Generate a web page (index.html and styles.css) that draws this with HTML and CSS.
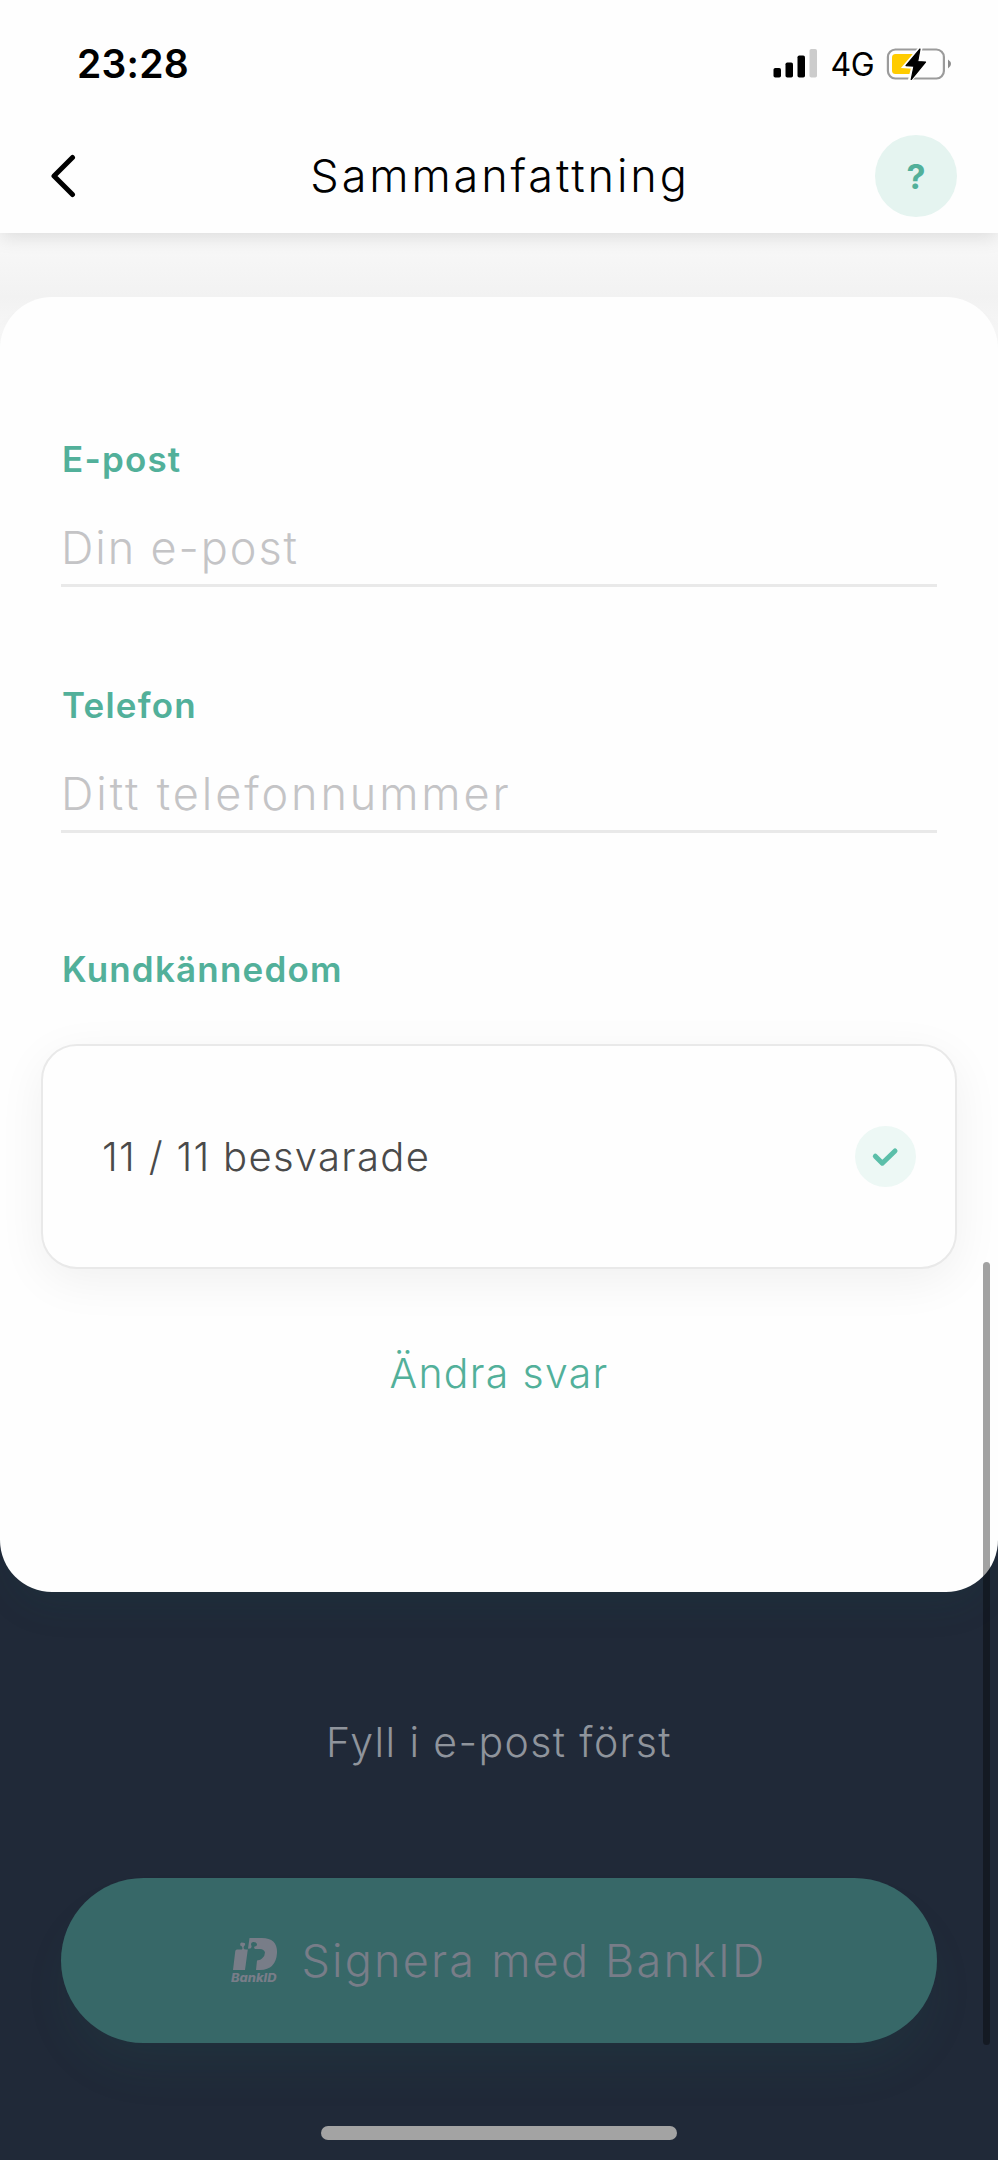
FILE: index.html
```html
<!DOCTYPE html>
<html lang="sv">

<head>
    <meta charset="UTF-8">
    <meta name="viewport" content="width=device-width, initial-scale=1.0">
    <title>Sammanfattning</title>
    <link rel="stylesheet" href="styles.css">
</head>

<body>

    <header>
        <div class="status-bar">
            <span class="time">23:28</span>
            <div class="status-icons">
                <svg class="signal" width="44" height="30" viewBox="0 0 44 30">
                    <rect x="0.5" y="19" width="7.5" height="9.5" rx="1.8" />
                    <rect x="12.5" y="13.5" width="7.5" height="15" rx="1.8" />
                    <rect x="24.5" y="6.5" width="7.5" height="22" rx="1.8" />
                    <rect x="36.5" y="0" width="7.5" height="28.5" rx="1.8" fill="#cccccc" />
                </svg>
                <span class="network">4G</span>
                <svg class="battery" width="66" height="34" viewBox="0 0 66 34">
                    <rect x="1.9" y="2.5" width="56" height="29" rx="7.5" fill="none" stroke="#9b9b9b" stroke-width="2.2" />
                    <path d="M62 12.5 Q65 14.5 65 17 Q65 19.5 62 21.5 Z" fill="#8c8c8c" />
                    <rect x="6" y="7" width="23" height="20" rx="3.5" fill="#ffcc00" />
                    <path d="M35 0 L18.5 19.5 L27 20 L23.5 34 L41 14.5 L32 14 Z" fill="#fff" stroke="#fff" stroke-width="3.5" />
                    <path d="M34 2 L20 18.6 L28 19.2 L25.2 32.5 L39.5 15 L31.7 14.5 Z" stroke="#000" stroke-width="1.2" stroke-linejoin="round" />
                </svg>
            </div>
        </div>
        <nav>
            <a href="#" class="back">
                <svg width="26" height="44" viewBox="0 0 26 44">
                    <path d="M22.5 3.5 L4 22 L22.5 40.5" />
                </svg>
            </a>
            <h1>Sammanfattning</h1>
            <a href="#" class="btn-help">?</a>
        </nav>
    </header>

    <main class="card">
        <div class="field">
            <label for="email">E-post</label>
            <input type="email" id="email" class="email" placeholder="Din e-post">
        </div>
        <div class="field">
            <label for="phone">Telefon</label>
            <input type="tel" id="phone" class="phone" placeholder="Ditt telefonnummer">
        </div>

        <h2>Kundkännedom</h2>
        <div class="answers">
            <span>11 / 11 besvarade</span>
            <svg width="61" height="61" viewBox="0 0 61 61">
                <circle cx="30.5" cy="30.5" r="30.5" fill="#edf8f5" />
                <path d="M20.3 30.2 L27.3 37.2 L40 25" />
            </svg>
        </div>
        <a href="#" class="edit-link">Ändra svar</a>
    </main>

    <footer>
        <p>Fyll i e-post först</p>
        <button class="btn-sign" disabled>
            <svg class="bankid" width="48" height="46" viewBox="0 0 48 46">
                <path d="M6 11.5 H9.8 Q12 11.5 11.3 9.5 L10.7 8.3 Q8.6 7.8 9.2 5.8 Q10 4 12 4.7 Q14.8 4.5 14 7 Q12.5 8.5 12.5 10 Q12.7 11.5 15 11.5 H16.8 L14 32 H2 L4.3 13 Q4.5 11.5 6 11.5 Z" />
                <path d="M18.5 0 H31 Q46.5 0 46 15 Q45 31.5 29 32 H25 L26 22.5 Q30 22 31 20.5 Q34 18 34 14.5 Q33 11 29 11 H24 Q22.5 10 23.5 8.5 Q26 8.5 26 6 Q25 3.8 22 4 Q19 4.5 20.5 8 Q21 10.5 18 10.8 L17 10.5 Z" />
                <text x="0" y="43.7" textLength="45.5" lengthAdjust="spacingAndGlyphs">BankID</text>
            </svg>
            <span>Signera med BankID</span>
        </button>
        <div class="home-indicator"></div>
    </footer>

    <div class="scroll-thumb"></div>

</body>

</html>
```
FILE: styles.css
```css
* {
    margin: 0;
    padding: 0;
    box-sizing: border-box;
    font-family: 'Inter', sans-serif;
}

body {
    background: #202938;
    width: 998px;
    height: 2160px;
    overflow: hidden;
    display: flex;
    flex-direction: column;
}

a {
    text-decoration: none;
}

header {
    position: relative;
    z-index: 2;
    height: 233px;
    background: #fefefe;
    box-shadow: 0 4px 18px rgba(0, 0, 0, 0.12);
}

.status-bar {
    height: 119px;
    padding: 8px 46px 0 77px;
    display: flex;
    align-items: center;
    justify-content: space-between;
}

.time {
    font-size: 39px;
    font-weight: 600;
    letter-spacing: 0.2px;
}

.status-icons {
    display: flex;
    align-items: center;
}

.network {
    font-size: 32px;
    letter-spacing: -0.5px;
    margin: 2px 12px 0 13px;
}

nav {
    height: 115px;
    padding: 0 41px 2px 50px;
    display: flex;
    align-items: center;
    justify-content: space-between;
}

.back {
    width: 75px;
    height: 44px;
}

.back path {
    fill: none;
    stroke: #000;
    stroke-width: 5;
    stroke-linecap: round;
    stroke-linejoin: round;
}

h1 {
    font-size: 45px;
    font-weight: 300;
    letter-spacing: 2.9px;
}

.btn-help {
    width: 82px;
    height: 82px;
    border-radius: 50%;
    background: #e5f4f0;
    color: #52b09a;
    font-size: 34px;
    font-weight: 700;
    line-height: 83px;
    text-align: center;
}

.card {
    position: relative;
    height: 1295px;
    margin-top: 64px;
    padding: 142px 41px 0;
    background: #fefefe;
    border-radius: 52px;
    display: flex;
    flex-direction: column;
    box-shadow: 0 24px 40px -16px rgba(20, 90, 80, 0.15);
}

/* light backdrop behind the top corners of the card */
.card::before {
    content: "";
    position: absolute;
    z-index: -1;
    left: 0;
    right: 0;
    top: -64px;
    height: 200px;
    background: linear-gradient(#f9f9f9, #f2f2f2 64px, #f8f8f8 110px);
}

.field {
    margin: 0 20px 98px 20px;
}

label,
h2 {
    display: block;
    color: #52b09a;
    font-size: 35px;
    font-weight: 600;
    line-height: 40px;
    letter-spacing: 1.2px;
}

label {
    margin: 0 0 31px 1px;
}

h2 {
    margin: 18px 0 55px 21px;
}

input {
    display: block;
    width: 100%;
    height: 77px;
    border: none;
    border-bottom: 3px solid #e9e9e9;
    background: none;
    font-size: 45px;
    font-weight: 300;
    outline: none;
}

input::placeholder {
    color: #c4c4c6;
}

.email {
    letter-spacing: 1.9px;
}

.phone {
    letter-spacing: 2.9px;
}

.answers {
    height: 225px;
    padding: 0 39px 0 59px;
    border: 2.5px solid #e9e9e9;
    border-radius: 36px;
    background: #fefefe;
    box-shadow: 0 12px 48px rgba(0, 0, 0, 0.06);
    display: flex;
    align-items: center;
    justify-content: space-between;
    color: #4a4a4a;
    font-size: 40px;
    font-weight: 300;
    letter-spacing: 1.3px;
}

.answers path {
    fill: none;
    stroke: #5bbfa9;
    stroke-width: 5;
    stroke-linecap: round;
    stroke-linejoin: round;
}

.edit-link {
    margin-top: 74px;
    color: #52b09a;
    font-size: 41px;
    font-weight: 300;
    line-height: 60px;
    letter-spacing: 1.3px;
    text-align: center;
}

footer {
    height: 568px;
    padding: 120px 61px 0;
    text-align: center;
}

footer p {
    color: #8f949c;
    font-size: 41px;
    font-weight: 300;
    line-height: 60px;
    letter-spacing: 1.4px;
}

.btn-sign {
    width: 876px;
    height: 165px;
    margin-top: 106px;
    border: none;
    border-radius: 83px;
    background: #376868;
    box-shadow: 0 30px 50px -10px rgba(40, 130, 110, 0.1);
    color: #787d88;
    display: flex;
    align-items: center;
    justify-content: center;
    font-size: 45px;
    font-weight: 300;
    letter-spacing: 2.2px;
}

.bankid {
    fill: #787d88;
    margin-right: 22px;
}

.bankid text {
    font-size: 11.5px;
    font-weight: 800;
    font-style: italic;
    letter-spacing: 0;
}

.home-indicator {
    width: 356px;
    height: 14px;
    margin: 83px auto 0;
    border-radius: 7px;
    background: #a3a3a3;
}

.scroll-thumb {
    position: absolute;
    z-index: 3;
    left: 983px;
    top: 1262px;
    width: 7px;
    height: 783px;
    border-radius: 4px;
    background: rgba(0, 0, 0, 0.36);
}
```
